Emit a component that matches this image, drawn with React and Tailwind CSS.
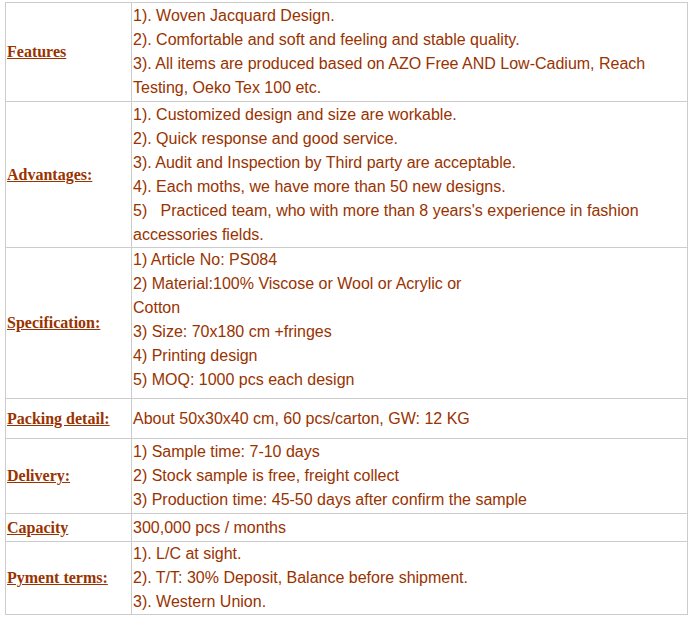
export default function App() {
  const rows = [
    {
      label: "Features",
      h: "h-[99px]",
      lines: [
        "1). Woven Jacquard Design.",
        "2). Comfortable and soft and feeling and stable quality.",
        "3). All items are produced based on AZO Free AND Low-Cadium, Reach",
        "Testing, Oeko Tex 100 etc.",
      ],
    },
    {
      label: "Advantages:",
      h: "h-[146px]",
      lines: [
        "1). Customized design and size are workable.",
        "2). Quick response and good service.",
        "3). Audit and Inspection by Third party are acceptable.",
        "4). Each moths, we have more than 50 new designs.",
        "5)\u00a0\u00a0\u00a0Practiced team, who with more than 8 years's experience in fashion",
        "accessories fields.",
      ],
    },
    {
      label: "Specification:",
      h: "h-[150px]",
      pb: true,
      lines: [
        "1) Article No: PS084",
        "2) Material:100% Viscose or Wool or Acrylic or",
        "Cotton",
        "3) Size: 70x180 cm +fringes",
        "4) Printing design",
        "5) MOQ: 1000 pcs each design",
      ],
    },
    {
      label: "Packing detail:",
      h: "h-[40px]",
      lines: ["About 50x30x40 cm, 60 pcs/carton, GW: 12 KG"],
    },
    {
      label: "Delivery:",
      h: "h-[75px]",
      lines: [
        "1) Sample time: 7-10 days",
        "2) Stock sample is free, freight collect",
        "3) Production time: 45-50 days after confirm the sample",
      ],
    },
    {
      label: "Capacity",
      h: "h-[28px]",
      lines: ["300,000 pcs / months"],
    },
    {
      label: "Pyment terms:",
      h: "h-[73px]",
      lines: [
        "1). L/C at sight.",
        "2). T/T: 30% Deposit, Balance before shipment.",
        "3). Western Union.",
      ],
    },
  ];
  return (
    <div className="bg-white pl-[5px] pt-[2px] w-[696px] h-[620px]">
      <table className="border-collapse w-[682px] table-fixed">
        <colgroup>
          <col className="w-[126px]" />
          <col className="w-[556px]" />
        </colgroup>
        <tbody>
          {rows.map((r) => (
            <tr key={r.label} className={r.h}>
              <td className="border border-[#cccccc] align-middle px-px py-0 text-[16px] leading-[24px] font-bold text-[#993300] underline [font-family:'Liberation_Serif',serif]">
                {r.label}
              </td>
              <td
                className={
                  "border border-[#cccccc] align-middle px-px py-0 text-[16px] leading-[24px] text-[#993300] [font-family:'Liberation_Sans',Arial,sans-serif] whitespace-nowrap " +
                  (r.pb ? "pb-[6px]" : "")
                }
              >
                {r.lines.map((l, i) => (
                  <div key={i}>{l}</div>
                ))}
              </td>
            </tr>
          ))}
        </tbody>
      </table>
    </div>
  );
}
